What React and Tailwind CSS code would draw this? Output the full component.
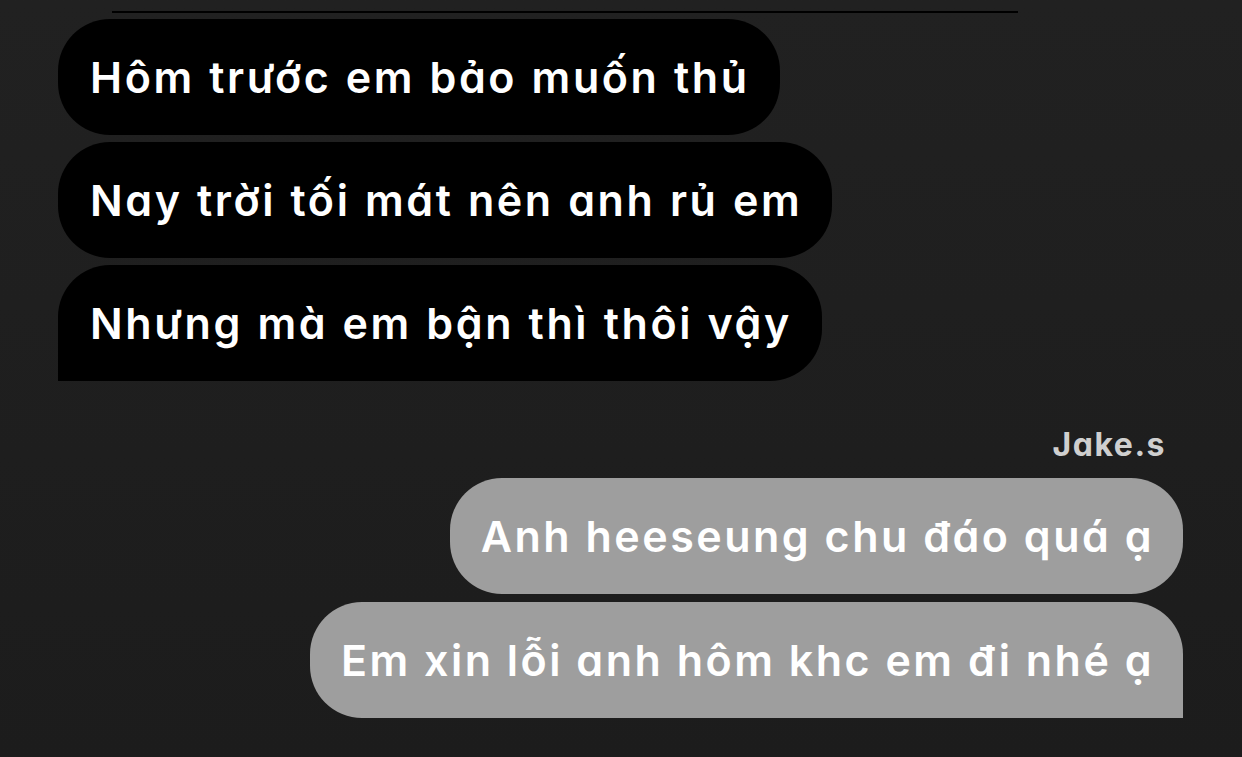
export default function App() {
  const font = { fontFamily: "Inter, 'Noto Sans', sans-serif", fontFeatureSettings: "'cv11', 'ss01'" };
  const left = [
    { t: "Hôm trước em bảo muốn thủ", r: "rounded-[52px]" },
    { t: "Nay trời tối mát nên anh rủ em", r: "rounded-[52px]" },
    { t: "Nhưng mà em bận thì thôi vậy", r: "rounded-[52px] rounded-bl-none" },
  ];
  const right = [
    { t: "Anh heeseung chu đáo quá ạ", r: "rounded-[52px]" },
    { t: "Em xin lỗi anh hôm khc em đi nhé ạ", r: "rounded-[52px] rounded-br-none" },
  ];
  return (
    <div className="w-[1242px] h-[757px] overflow-hidden bg-gradient-to-b from-[#212121] to-[#1c1c1c]" style={font}>
      <div className="pt-[11px] pl-[112px] w-[1018px]">
        <div className="h-[2px] bg-black" />
      </div>
      <div className="flex flex-col items-start gap-[7px] pl-[58px] pt-[6px]">
        {left.map((b, i) => (
          <div key={i} className={`h-[116px] flex items-center pl-[32px] pr-[30px] bg-black text-white text-[43px] font-semibold tracking-[2.6px] [word-spacing:1px] whitespace-nowrap ${b.r}`}>
            {b.t}
          </div>
        ))}
      </div>
      <div className="flex flex-col items-end pr-[59px]">
        <div className="mt-[44px] mr-[17px] text-[32px] font-bold tracking-[1.5px] text-[#cfcfcf] leading-[40px]">Jake.s</div>
        <div className="mt-[13px] flex flex-col items-end gap-[8px]">
          {right.map((b, i) => (
            <div key={i} className={`h-[116px] flex items-center pl-[31px] pr-[29px] bg-[#9e9e9e] text-white text-[43px] font-semibold tracking-[2.5px] whitespace-nowrap ${b.r}`}>
              {b.t}
            </div>
          ))}
        </div>
      </div>
    </div>
  );
}
